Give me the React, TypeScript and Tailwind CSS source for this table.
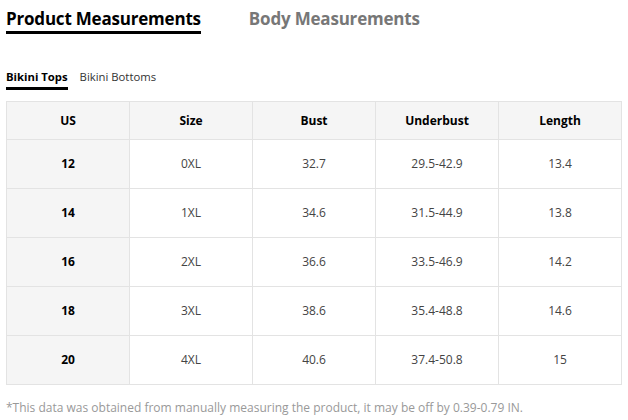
import React, { useState } from 'react';

const rows = [
  { us: '12', size: '0XL', bust: '32.7', underbust: '29.5-42.9', length: '13.4' },
  { us: '14', size: '1XL', bust: '34.6', underbust: '31.5-44.9', length: '13.8' },
  { us: '16', size: '2XL', bust: '36.6', underbust: '33.5-46.9', length: '14.2' },
  { us: '18', size: '3XL', bust: '38.6', underbust: '35.4-48.8', length: '14.6' },
  { us: '20', size: '4XL', bust: '40.6', underbust: '37.4-50.8', length: '15' },
];

const headers = ['US', 'Size', 'Bust', 'Underbust', 'Length'];

export default function App() {
  const [tab, setTab] = useState('product');
  const [sub, setSub] = useState('tops');

  return (
    <div className="w-[628px] h-[420px] bg-white text-[#222] font-['Open_Sans',sans-serif] pl-[6px] pr-[6px]">
      <div className="flex items-end gap-[48px] pt-[6px] h-[34px]">
        <button
          onClick={() => setTab('product')}
          className={`text-[17px] font-bold leading-[24px] tracking-[-0.2px] border-b-[3px] ${tab === 'product' ? 'text-black border-black' : 'text-[#777] border-transparent'}`}
        >
          Product Measurements
        </button>
        <button
          onClick={() => setTab('body')}
          className={`text-[17px] font-bold leading-[24px] tracking-[-0.2px] border-b-[3px] ${tab === 'body' ? 'text-black border-black' : 'text-[#777] border-transparent'}`}
        >
          Body Measurements
        </button>
      </div>

      <div className="flex items-end gap-[12px] mt-[32px] h-[24px]">
        <button
          onClick={() => setSub('tops')}
          className={`text-[11.3px] leading-[18px] border-b-[3px] pb-[1px] ${sub === 'tops' ? 'font-bold text-black border-black' : 'text-[#333] border-transparent'}`}
        >
          Bikini Tops
        </button>
        <button
          onClick={() => setSub('bottoms')}
          className={`text-[11.3px] leading-[18px] border-b-[3px] pb-[1px] ${sub === 'bottoms' ? 'font-bold text-black border-black' : 'text-[#333] border-transparent'}`}
        >
          Bikini Bottoms
        </button>
      </div>

      <table className="mt-[11px] w-[616px] table-fixed border-collapse text-[12px]">
        <thead>
          <tr className="h-[38px] bg-[#f5f5f5]">
            {headers.map((h) => (
              <th key={h} className="border border-[#e3e3e3] font-bold text-black">{h}</th>
            ))}
          </tr>
        </thead>
        <tbody>
          {rows.map((r) => (
            <tr key={r.us} className="h-[49px]">
              <td className="border border-[#e3e3e3] bg-[#f5f5f5] text-center font-bold text-black">{r.us}</td>
              <td className="border border-[#e3e3e3] text-center text-[#444]">{r.size}</td>
              <td className="border border-[#e3e3e3] text-center text-[#444]">{r.bust}</td>
              <td className="border border-[#e3e3e3] text-center text-[#444]">{r.underbust}</td>
              <td className="border border-[#e3e3e3] text-center text-[#444]">{r.length}</td>
            </tr>
          ))}
        </tbody>
      </table>

      <p className="mt-[14px] text-[12px] text-[#999]">
        *This data was obtained from manually measuring the product, it may be off by 0.39-0.79 IN.
      </p>
    </div>
  );
}
